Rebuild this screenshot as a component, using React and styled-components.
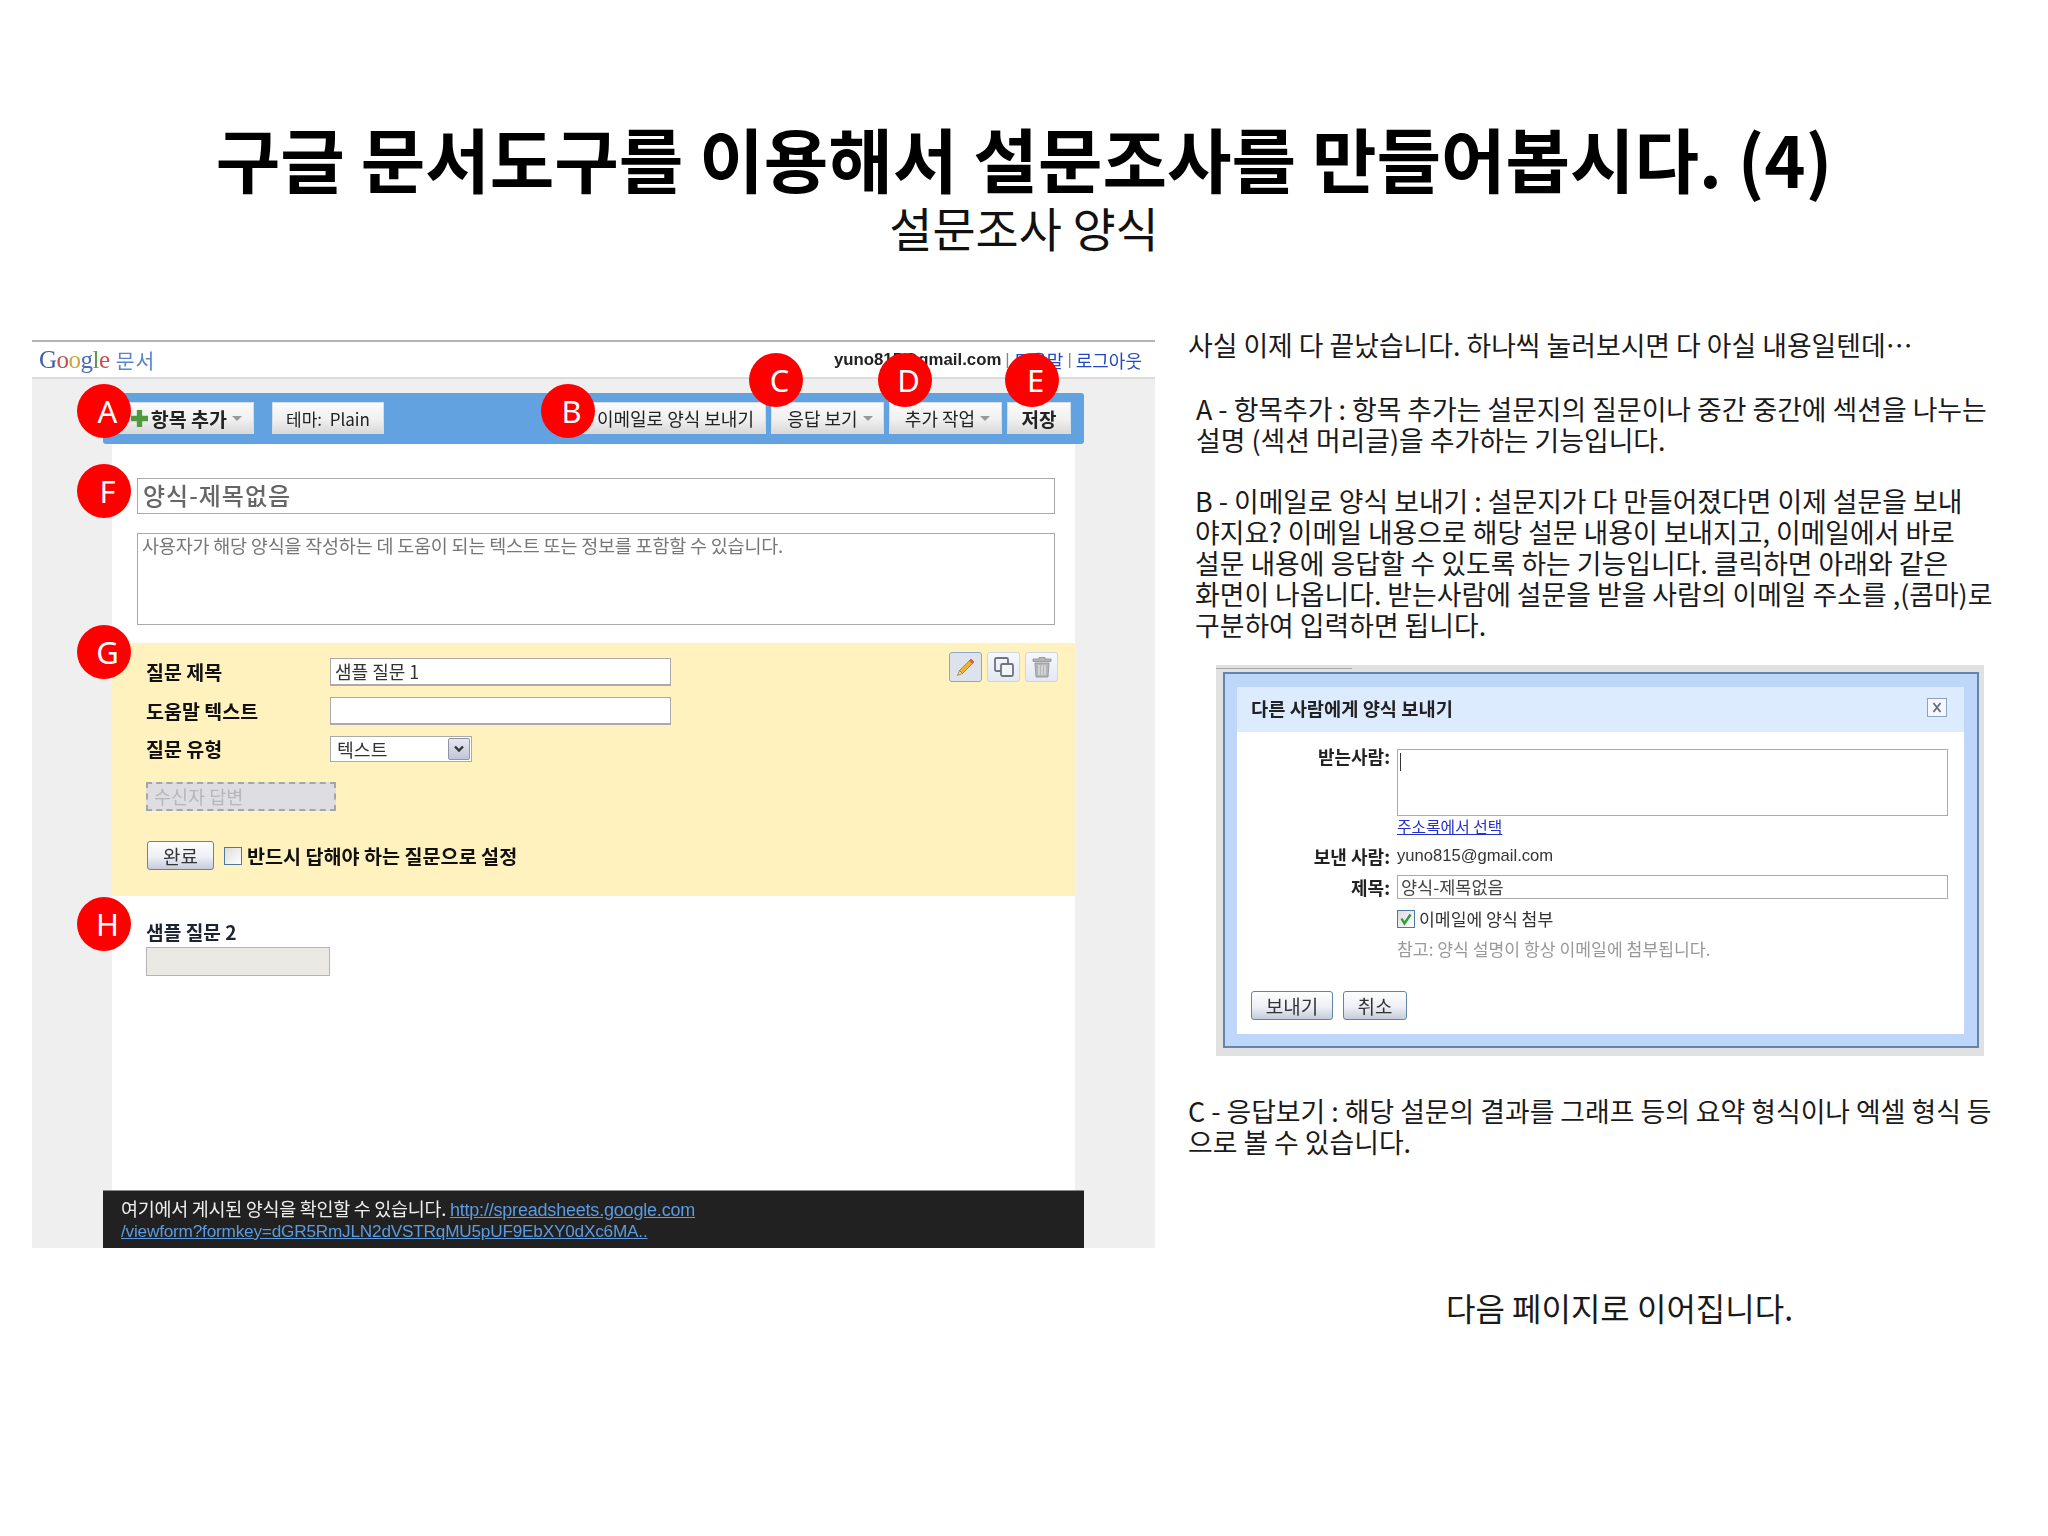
import React from 'react';
import styled, { createGlobalStyle } from 'styled-components';

const GlobalStyle = createGlobalStyle`
  html, body { margin: 0; padding: 0; background: #fff; }
  body { font-family: 'Noto Sans CJK KR', 'Noto Sans', sans-serif; color: #111; }
`;

const Slide = styled.div`
  width: 2048px;
  height: 1536px;
  padding-top: 114px;
  box-sizing: border-box;
  overflow: hidden;
`;

const Title = styled.h1`
  margin: 0;
  text-align: center;
  font-size: 70.15px;
  line-height: 87px;
  font-weight: 700;
  color: #000;
`;

const Subtitle = styled.h2`
  margin: 0;
  text-align: center;
  font-size: 46.9px;
  line-height: 52px;
  font-weight: 400;
  color: #111;
`;

const Columns = styled.div`
  display: flex;
  margin-top: 87px;
  padding-left: 32px;
`;

/* left: the pasted screenshot */
const Panel = styled.div`
  position: relative;
  width: 1123px;
  height: 908px;
  flex: none;
`;

const Shot = styled.div`
  height: 100%;
  display: flex;
  flex-direction: column;
  filter: blur(0.45px);
`;

const TopBar = styled.div`
  height: 39px;
  flex: none;
  box-sizing: border-box;
  display: flex;
  align-items: center;
  justify-content: space-between;
  padding: 0 13px 0 7px;
  border-top: 2px solid #b4b4b4;
  border-bottom: 2px solid #dcdcdc;
  background: #fff;
`;

const Logo = styled.div`
  display: flex;
  align-items: center;
  gap: 6px;
  font-size: 25px;
  letter-spacing: -0.5px;
  font-family: 'Liberation Serif', serif;
`;

const LogoLetter = styled.span`
  color: ${({ $c }) => $c};
`;

const LogoWord = styled.span`
  font-family: 'Noto Sans CJK KR', sans-serif;
  font-size: 20.5px;
  letter-spacing: 1px;
  color: #5a86cf;
`;

const Account = styled.div`
  font-family: 'Liberation Sans', 'Noto Sans CJK KR', sans-serif;
  font-size: 16.8px;
  font-weight: 700;
  color: #222;
  display: flex;
  align-items: center;
  gap: 4px;
`;

const TopLink = styled.span`
  font-family: 'Noto Sans CJK KR', sans-serif;
  font-size: 18px;
  font-weight: 400;
  color: #2348c0;
`;

const Pipe = styled.span`
  color: #888;
  font-weight: 400;
`;

const Body = styled.div`
  flex: 1;
  min-height: 0;
  display: flex;
  flex-direction: column;
  padding-top: 14px;
  background: #efefef;
`;

const Toolbar = styled.div`
  height: 51px;
  flex: none;
  box-sizing: border-box;
  margin: 0 71px;
  padding: 9px 12px 0 11px;
  display: flex;
  gap: 5px;
  background: #63a2e0;
  border-radius: 3px;
`;

const ToolButton = styled.div`
  width: ${({ $w }) => $w}px;
  height: 32px;
  flex: none;
  box-sizing: border-box;
  display: flex;
  align-items: center;
  justify-content: ${({ $end }) => ($end ? 'flex-end' : 'center')};
  gap: 3px;
  padding-right: ${({ $end }) => ($end ? '11px' : '0')};
  padding-left: ${({ $pl }) => $pl || 0}px;
  margin-left: ${({ $gap }) => $gap || 0}px;
  font-size: ${({ $size }) => $size || 18}px;
  font-weight: ${({ $bold }) => ($bold ? 700 : 400)};
  color: #222;
  background: linear-gradient(#fbfbfb 0%, #f0f0f0 55%, #d9d9d9 100%);
  border: 1px solid #d5dde6;
  white-space: nowrap;
`;

const Caret = styled.i`
  width: 0;
  height: 0;
  border-left: 5px solid transparent;
  border-right: 5px solid transparent;
  border-top: 5px solid #999;
  margin-left: 2px;
`;

const Sheet = styled.div`
  flex: 1;
  min-height: 0;
  margin: 0 80px;
  padding-top: 34px;
  background: #fff;
  display: flex;
  flex-direction: column;
`;

const FormTitle = styled.div`
  height: 36px;
  flex: none;
  box-sizing: border-box;
  margin: 0 20px 0 25px;
  padding-left: 5px;
  border: 1px solid #aaa;
  font-size: 24px;
  line-height: 32px;
  font-weight: 500;
  letter-spacing: 1px;
  color: #666;
`;

const FormDesc = styled.div`
  height: 92px;
  flex: none;
  box-sizing: border-box;
  margin: 19px 20px 0 25px;
  padding: 0 4px;
  border: 1px solid #aaa;
  font-size: 18.5px;
  line-height: 22px;
  letter-spacing: -0.2px;
  color: #777;
`;

const Editor = styled.div`
  position: relative;
  height: 253px;
  flex: none;
  box-sizing: border-box;
  margin-top: 18px;
  padding: 15px 0 0 34px;
  background: #fff2be;
`;

const EditorRow = styled.div`
  display: flex;
  align-items: center;
  height: ${({ $h }) => $h}px;
  margin-bottom: ${({ $mb }) => $mb}px;
`;

const FieldLabel = styled.div`
  width: 184px;
  font-size: 19.5px;
  line-height: 24px;
  font-weight: 700;
  color: #111;
`;

const FieldInput = styled.div`
  width: 341px;
  height: 28px;
  box-sizing: border-box;
  padding-left: 4px;
  background: #fff;
  border: 1px solid #aaa;
  border-width: 1px 1px 2px 1px;
  font-size: 18px;
  line-height: 24px;
  color: #333;
`;

const SelectBox = styled.div`
  width: 142px;
  height: 26px;
  box-sizing: border-box;
  display: flex;
  align-items: center;
  justify-content: space-between;
  padding: 0 1px 0 6px;
  background: #fff;
  border: 1px solid #aaa;
  font-size: 18.3px;
  color: #333;
`;

const SelectArrow = styled.div`
  width: 22px;
  height: 22px;
  display: flex;
  align-items: center;
  justify-content: center;
  background: linear-gradient(#e4e6ef, #c2c5d6);
  border: 1px solid #8f93a8;
  box-sizing: border-box;
  border-radius: 2px;
`;

const AnswerHolder = styled.div`
  width: 190px;
  height: 29px;
  box-sizing: border-box;
  padding-left: 6px;
  background: #dddde2;
  border: 2px dashed #a6a6a6;
  font-size: 18.5px;
  line-height: 24px;
  color: #b7b7b7;
`;

const DoneRow = styled.div`
  display: flex;
  align-items: center;
  gap: 5px;
  margin-top: 30px;
`;

const PlainButton = styled.div`
  width: ${({ $w }) => $w}px;
  height: 29px;
  margin-left: 1px;
  margin-right: ${({ $mr }) => $mr || 0}px;
  box-sizing: border-box;
  display: flex;
  align-items: center;
  justify-content: center;
  font-size: 19px;
  color: #333;
  background: linear-gradient(#fdfdfe 0%, #eef0f6 55%, #c5cbdc 100%);
  border: 1px solid #5f86a6;
  border-radius: 3px;
`;

const CheckBox = styled.div`
  width: 18px;
  height: 18px;
  flex: none;
  box-sizing: border-box;
  display: flex;
  align-items: center;
  justify-content: center;
  background: linear-gradient(135deg, #dcdcdc, #fff);
  border: 1px solid #4d7a9c;
`;

const RequiredText = styled.div`
  font-size: 19.6px;
  line-height: 24px;
  font-weight: 700;
  color: #111;
`;

const IconTools = styled.div`
  position: absolute;
  top: 9px;
  right: 17px;
  display: flex;
  gap: 5px;
`;

const IconTool = styled.div`
  width: 33px;
  height: 30px;
  box-sizing: border-box;
  display: flex;
  align-items: center;
  justify-content: center;
  background: ${({ $on }) => ($on ? '#dde2ec' : 'linear-gradient(#f6f8fc, #e3e8f2)')};
  border: 1px solid ${({ $on }) => ($on ? '#88aac8' : '#cdd5e2')};
  border-radius: 3px;
`;

const SecondQuestion = styled.div`
  padding: 24px 0 0 34px;
`;

const SecondLabel = styled.div`
  font-size: 19.2px;
  line-height: 24px;
  font-weight: 700;
  color: #1c2434;
`;

const SecondInput = styled.div`
  width: 184px;
  height: 29px;
  box-sizing: border-box;
  margin-top: 3px;
  background: #ebe9e4;
  border: 1px solid #b5b5b5;
`;

const NoticeBar = styled.div`
  height: 58px;
  flex: none;
  box-sizing: border-box;
  margin: 0 71px;
  padding: 7px 0 0 18px;
  background: #212121;
  border-top: 1px solid #888;
  font-size: 18.5px;
  line-height: 21px;
  color: #eee;
  letter-spacing: -0.3px;
  white-space: nowrap;
`;

const NoticeLink = styled.span`
  font-family: 'Liberation Sans', sans-serif;
  font-size: ${({ $size }) => $size}px;
  line-height: 1;
  color: #5b9be0;
  text-decoration: underline;
  letter-spacing: -0.2px;
`;

const Badge = styled.div`
  position: absolute;
  left: ${({ $x }) => $x}px;
  top: ${({ $y }) => $y}px;
  width: 54px;
  height: 54px;
  box-sizing: border-box;
  padding-left: 7px;
  border-radius: 50%;
  background: #fe0000;
  color: #fff;
  display: flex;
  align-items: center;
  justify-content: center;
  font-family: 'Noto Sans', sans-serif;
  font-size: 31px;
`;

/* right: explanation column */
const Notes = styled.div`
  margin: -10px 0 0 33px;
  width: 810px;
  flex: none;
  display: flex;
  flex-direction: column;
`;

const Paragraph = styled.p`
  margin: ${({ $top }) => $top || 0}px 0 0 ${({ $indent }) => $indent || 0}px;
  font-size: 26.85px;
  line-height: 30.8px;
  color: #1a1a1a;
  white-space: nowrap;
`;

const DialogFrame = styled.div`
  position: relative;
  width: 768px;
  height: 391px;
  flex: none;
  box-sizing: border-box;
  margin: 25px 0 0 28px;
  padding: 7px 5px 8px 7px;
  background: #e1e1e1;

  &::before {
    content: '';
    position: absolute;
    left: 0;
    top: 3px;
    width: 136px;
    border-top: 1px solid #a8a8a8;
  }
`;

const Dialog = styled.div`
  position: relative;
  height: 100%;
  box-sizing: border-box;
  padding: 13px 13px 12px 12px;
  background: #bfd6fb;
  border: 2px solid #6583ad;
  filter: blur(0.4px);
`;

const DialogInner = styled.div`
  height: 100%;
  background: #fff;
  display: flex;
  flex-direction: column;
`;

const DialogHead = styled.div`
  height: 45px;
  flex: none;
  box-sizing: border-box;
  display: flex;
  align-items: center;
  justify-content: space-between;
  padding: 0 17px 4px 14px;
  background: #dcebfd;
  font-size: 18.7px;
  font-weight: 700;
  color: #222;
`;

const CloseBox = styled.div`
  width: 20px;
  height: 19px;
  box-sizing: border-box;
  display: flex;
  align-items: center;
  justify-content: center;
  border: 1px solid #8ba3c0;
  background: #f4f8fd;
`;

const DialogRow = styled.div`
  display: grid;
  grid-template-columns: 153px 1fr;
  column-gap: 7px;
  align-items: ${({ $top }) => ($top ? 'start' : 'center')};
  margin-top: ${({ $mt }) => $mt}px;
  padding-right: 16px;
`;

const DialogLabel = styled.div`
  text-align: right;
  font-size: 18px;
  line-height: ${({ $lh }) => $lh || 22}px;
  font-weight: 700;
  color: #222;
`;

const ToArea = styled.div`
  height: 67px;
  box-sizing: border-box;
  padding: 3px 0 0 2px;
  border: 1px solid #aaa;
`;

const Cursor = styled.div`
  width: 1px;
  height: 18px;
  background: #333;
`;

const DialogLink = styled.div`
  font-size: 15.8px;
  line-height: 18px;
  color: #2430c8;
  text-decoration: underline;
`;

const DialogValue = styled.div`
  font-family: 'Liberation Sans', sans-serif;
  font-size: 16.6px;
  line-height: 22px;
  color: #333;
`;

const SubjectInput = styled.div`
  height: 24px;
  box-sizing: border-box;
  padding-left: 3px;
  border: 1px solid #aaa;
  font-size: 17.5px;
  line-height: 21px;
  color: #444;
`;

const AttachRow = styled.div`
  display: flex;
  align-items: center;
  gap: 4px;
  font-size: 17.2px;
  line-height: 18px;
  color: #333;
`;

const NoteText = styled.div`
  font-size: 17.2px;
  line-height: 22px;
  color: #999;
`;

const DialogActions = styled.div`
  display: flex;
  gap: 9px;
  margin-top: 31px;
  padding-left: 13px;
`;

const NextPage = styled.p`
  margin: 130px 0 0 258px;
  font-size: 32px;
  line-height: 38px;
  color: #1a1a1a;
`;

const logoLetters = [
  ['G', '#3b5fa8'],
  ['o', '#c4504a'],
  ['o', '#d0a53c'],
  ['g', '#4a6fb5'],
  ['l', '#5a9a55'],
  ['e', '#c4504a'],
];

const badges = [
  ['A', 45, 44],
  ['B', 509, 44],
  ['C', 717, 13],
  ['D', 846, 13],
  ['E', 973, 13],
  ['F', 45, 124],
  ['G', 45, 285],
  ['H', 45, 557],
];

const PlusIcon = () => (
  <svg width="17" height="17" viewBox="0 0 16 16">
    <path d="M5.5 0h5v5.5H16v5h-5.500V16h-5v-5.500H0v-5h5.500z" fill="#4f9a3f" />
  </svg>
);

const PencilIcon = () => (
  <svg width="20" height="20" viewBox="0 0 20 20">
    <path d="M15 2l3 3L6.500 16.500l-3-3z" fill="#eeb32c" stroke="#a87a1c" strokeWidth="0.8" />
    <path d="M15 2l3 3-1.800 1.800-3-3z" fill="#e0574e" />
    <path d="M3.500 13.500l3 3L1.500 18.500z" fill="#f3dcb0" stroke="#7c5a26" strokeWidth="0.6" />
  </svg>
);

const CopyIcon = () => (
  <svg width="24" height="24" viewBox="0 0 24 24" fill="none" stroke="#6d7480" strokeWidth="1.8">
    <rect x="3" y="3" width="13" height="13" rx="1.500" />
    <rect x="9" y="9" width="12" height="12" rx="1.500" fill="#f2f4f8" />
  </svg>
);

const TrashIcon = () => (
  <svg width="22" height="22" viewBox="0 0 22 22" fill="#b4b6b8" stroke="#8c8e90" strokeWidth="0.8">
    <path d="M8 3V1.500h6V3h6v2.500H2V3z" />
    <path d="M4 7h14l-1 14H5z" />
    <path d="M8 9v10M11 9v10M14 9v10" stroke="#e4e4e4" strokeWidth="1.200" fill="none" />
  </svg>
);

const ChevronIcon = () => (
  <svg width="12" height="10" viewBox="0 0 12 10" fill="none">
    <path d="M2 2.500l4 4 4-4" stroke="#30343f" strokeWidth="2.400" />
  </svg>
);

const CheckIcon = () => (
  <svg width="14" height="14" viewBox="0 0 14 14" fill="none">
    <path d="M2.500 6.500l3 5 6-9" stroke="#2f9e3a" strokeWidth="2.400" />
  </svg>
);

const CloseIcon = () => (
  <svg width="12" height="13" viewBox="0 0 12 13" fill="none">
    <path d="M2.500 2l7 9M9.500 2l-7 9" stroke="#5f6d80" strokeWidth="1.800" />
  </svg>
);

const ScreenshotPanel = () => (
  <Panel>
    <Shot>
      <TopBar>
        <Logo>
          <span>
            {logoLetters.map(([l, c], i) => (
              <LogoLetter key={i} $c={c}>{l}</LogoLetter>
            ))}
          </span>
          <LogoWord>문서</LogoWord>
        </Logo>
        <Account>
          yuno815@gmail.com <Pipe>|</Pipe> <TopLink>도움말</TopLink> <Pipe>|</Pipe> <TopLink>로그아웃</TopLink>
        </Account>
      </TopBar>
      <Body>
        <Toolbar>
          <ToolButton $w={140} $end $bold $size={19.5}>
            <PlusIcon />항목 추가<Caret />
          </ToolButton>
          <ToolButton $w={112} $gap={13} $size={17}>테마:&nbsp; Plain</ToolButton>
          <ToolButton $w={193} $gap={184} $end>이메일로 양식 보내기</ToolButton>
          <ToolButton $w={113} $pl={5}>응답 보기<Caret /></ToolButton>
          <ToolButton $w={113} $pl={4}>추가 작업<Caret /></ToolButton>
          <ToolButton $w={64} $bold $size={19}>저장</ToolButton>
        </Toolbar>
        <Sheet>
          <FormTitle>양식-제목없음</FormTitle>
          <FormDesc>사용자가 해당 양식을 작성하는 데 도움이 되는 텍스트 또는 정보를 포함할 수 있습니다.</FormDesc>
          <Editor>
            <IconTools>
              <IconTool $on><PencilIcon /></IconTool>
              <IconTool><CopyIcon /></IconTool>
              <IconTool><TrashIcon /></IconTool>
            </IconTools>
            <EditorRow $h={28} $mb={11}>
              <FieldLabel>질문 제목</FieldLabel>
              <FieldInput>샘플 질문 1</FieldInput>
            </EditorRow>
            <EditorRow $h={28} $mb={11}>
              <FieldLabel>도움말 텍스트</FieldLabel>
              <FieldInput />
            </EditorRow>
            <EditorRow $h={26} $mb={20}>
              <FieldLabel>질문 유형</FieldLabel>
              <SelectBox>
                텍스트
                <SelectArrow><ChevronIcon /></SelectArrow>
              </SelectBox>
            </EditorRow>
            <AnswerHolder>수신자 답변</AnswerHolder>
            <DoneRow>
              <PlainButton $w={67} $mr={5}>완료</PlainButton>
              <CheckBox />
              <RequiredText>반드시 답해야 하는 질문으로 설정</RequiredText>
            </DoneRow>
          </Editor>
          <SecondQuestion>
            <SecondLabel>샘플 질문 2</SecondLabel>
            <SecondInput />
          </SecondQuestion>
        </Sheet>
        <NoticeBar>
          여기에서 게시된 양식을 확인할 수 있습니다. <NoticeLink $size={18}>http://spreadsheets.google.com</NoticeLink>
          <br />
          <NoticeLink $size={17.2}>/viewform?formkey=dGR5RmJLN2dVSTRqMU5pUF9EbXY0dXc6MA..</NoticeLink>
        </NoticeBar>
      </Body>
    </Shot>
    {badges.map(([letter, x, y]) => (
      <Badge key={letter} $x={x} $y={y}>{letter}</Badge>
    ))}
  </Panel>
);

const SendDialog = () => (
  <DialogFrame>
    <Dialog>
      <DialogInner>
        <DialogHead>
          다른 사람에게 양식 보내기
          <CloseBox><CloseIcon /></CloseBox>
        </DialogHead>
        <DialogRow $top $mt={17}>
          <DialogLabel $lh={14}>받는사람:</DialogLabel>
          <ToArea><Cursor /></ToArea>
        </DialogRow>
        <DialogRow $mt={2}>
          <span />
          <DialogLink>주소록에서 선택</DialogLink>
        </DialogRow>
        <DialogRow $mt={9}>
          <DialogLabel>보낸 사람:</DialogLabel>
          <DialogValue>yuno815@gmail.com</DialogValue>
        </DialogRow>
        <DialogRow $mt={8}>
          <DialogLabel>제목:</DialogLabel>
          <SubjectInput>양식-제목없음</SubjectInput>
        </DialogRow>
        <DialogRow $mt={11}>
          <span />
          <AttachRow>
            <CheckBox><CheckIcon /></CheckBox>
            이메일에 양식 첨부
          </AttachRow>
        </DialogRow>
        <DialogRow $mt={10}>
          <span />
          <NoteText>참고: 양식 설명이 항상 이메일에 첨부됩니다.</NoteText>
        </DialogRow>
        <DialogActions>
          <PlainButton $w={82}>보내기</PlainButton>
          <PlainButton $w={64}>취소</PlainButton>
        </DialogActions>
      </DialogInner>
    </Dialog>
  </DialogFrame>
);

const App = () => (
  <>
    <GlobalStyle />
    <Slide>
      <Title>구글 문서도구를 이용해서 설문조사를 만들어봅시다. (4)</Title>
      <Subtitle>설문조사 양식</Subtitle>
      <Columns>
        <ScreenshotPanel />
        <Notes>
          <Paragraph>사실 이제 다 끝났습니다. 하나씩 눌러보시면 다 아실 내용일텐데…</Paragraph>
          <Paragraph $top={33} $indent={8}>
            A - 항목추가 : 항목 추가는 설문지의 질문이나 중간 중간에 섹션을 나누는
            <br />
            설명 (섹션 머리글)을 추가하는 기능입니다.
          </Paragraph>
          <Paragraph $top={31} $indent={7}>
            B - 이메일로 양식 보내기 : 설문지가 다 만들어졌다면 이제 설문을 보내
            <br />
            야지요? 이메일 내용으로 해당 설문 내용이 보내지고, 이메일에서 바로
            <br />
            설문 내용에 응답할 수 있도록 하는 기능입니다. 클릭하면 아래와 같은
            <br />
            화면이 나옵니다. 받는사람에 설문을 받을 사람의 이메일 주소를 ,(콤마)로
            <br />
            구분하여 입력하면 됩니다.
          </Paragraph>
          <SendDialog />
          <Paragraph $top={40}>
            C - 응답보기 : 해당 설문의 결과를 그래프 등의 요약 형식이나 엑셀 형식 등
            <br />
            으로 볼 수 있습니다.
          </Paragraph>
          <NextPage>다음 페이지로 이어집니다.</NextPage>
        </Notes>
      </Columns>
    </Slide>
  </>
);

export default App;
